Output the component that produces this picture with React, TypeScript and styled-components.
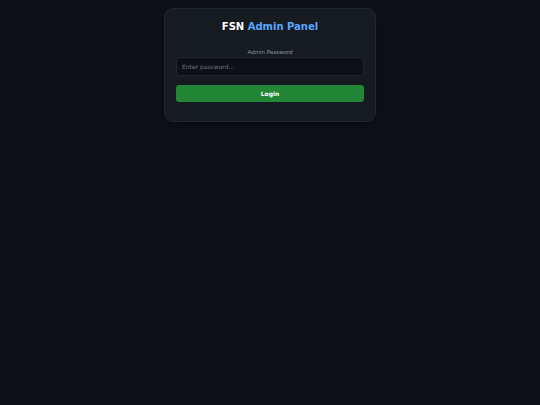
import styled, { createGlobalStyle } from "styled-components";

const GlobalStyle = createGlobalStyle`
  html, body {
    margin: 0;
    padding: 0;
    background: #0d1117;
    min-height: 100%;
  }
  body {
    font-family: "DejaVu Sans", Verdana, sans-serif;
    color: #c9d1d9;
  }
`;

const Page = styled.div`
  min-height: 405px;
  display: flex;
  justify-content: center;
  align-items: flex-start;
  padding-top: 8px;
  box-sizing: border-box;
`;

const Card = styled.div`
  width: 212px;
  box-sizing: border-box;
  background: #161b22;
  border: 1px solid #21262d;
  border-radius: 9px;
  padding: 12px 11px 19px;
  display: flex;
  flex-direction: column;
  box-shadow: 0 2px 8px rgba(0, 0, 0, 0.35);
`;

const Title = styled.h1`
  margin: 0 0 16px;
  font-size: 10px;
  font-weight: bold;
  text-align: center;
  color: #ffffff;
  line-height: 12px;

  span {
    color: #58a6ff;
  }
`;

const Label = styled.label`
  display: block;
  text-align: center;
  font-size: 5.5px;
  line-height: 7px;
  color: #8b949e;
  margin-bottom: 1px;
`;

const Input = styled.input`
  width: 100%;
  height: 19px;
  box-sizing: border-box;
  background: #0d1117;
  border: 1px solid #21262d;
  border-radius: 4px;
  padding: 0 5px;
  font-family: "DejaVu Sans", Verdana, sans-serif;
  font-size: 6px;
  color: #c9d1d9;
  outline: none;

  &::placeholder {
    color: #6e7681;
  }
`;

const Button = styled.button`
  margin-top: 9px;
  width: 100%;
  height: 17px;
  background: #238636;
  border: none;
  border-radius: 3px;
  color: #ffffff;
  font-family: "DejaVu Sans", Verdana, sans-serif;
  font-size: 6px;
  font-weight: bold;
  cursor: pointer;
`;

export default function App() {
  return (
    <>
      <GlobalStyle />
      <Page>
        <Card>
          <Title>
            FSN <span>Admin Panel</span>
          </Title>
          <Label htmlFor="pw">Admin Password</Label>
          <Input id="pw" type="password" placeholder="Enter password..." />
          <Button>Login</Button>
        </Card>
      </Page>
    </>
  );
}
